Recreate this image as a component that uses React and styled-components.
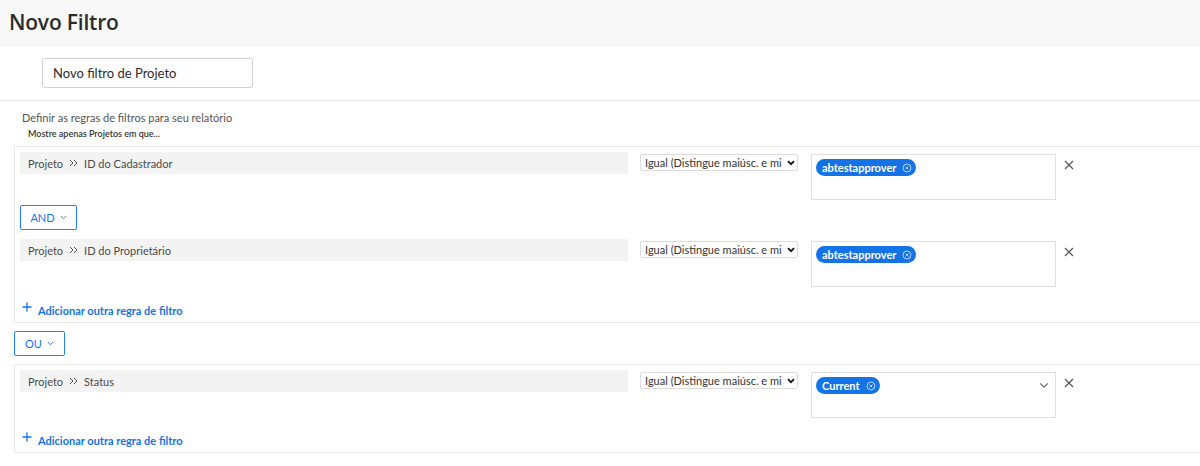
import React from "react";
import styled, { createGlobalStyle } from "styled-components";

const GlobalStyle = createGlobalStyle`
  html, body { margin: 0; padding: 0; background: #fff; }
  body { font-family: Lato, "Open Sans", Arial, sans-serif; color: #2c2c2c; overflow-x: hidden; }
  * { box-sizing: border-box; }
`;

const Page = styled.div`
  width: 1200px;
  overflow: hidden;
`;

const Header = styled.header`
  height: 47px;
  background: #f8f8f8;
  padding: 0 0 3px 9px;
  display: flex;
  align-items: center;
`;

const Title = styled.h1`
  margin: 0;
  font-family: "Open Sans", Lato, sans-serif;
  font-size: 21px;
  font-weight: 600;
  color: #2c2c2c;
  letter-spacing: -0.2px;
`;

const NameSection = styled.div`
  padding: 11px 0 12px 42px;
  border-bottom: 1px solid #e6e6e6;
`;

const NameInput = styled.div`
  width: 211px;
  height: 30px;
  border: 1px solid #cfcfcf;
  border-radius: 3px;
  display: flex;
  align-items: center;
  padding-left: 10px;
  font-size: 13px;
  color: #2c2c2c;
`;

const Rules = styled.section`
  padding: 10px 0 0 14px;
`;

const Intro = styled.div`
  padding-left: 8px;
  font-size: 11px;
  color: #555;
  line-height: 14px;
`;

const Subtitle = styled.div`
  padding-left: 14px;
  margin-top: 3px;
  font-size: 9px;
  color: #333;
  line-height: 12px;
  font-weight: 600;
`;

const Group = styled.div`
  width: 1220px;
  margin-top: ${(p) => p.$mt}px;
  border: 1px solid #e8e8e8;
  padding: ${(p) => p.$pt}px 5px 0 5px;
`;

const Row = styled.div`
  display: grid;
  grid-template-columns: 608px 158px 246px 16px;
  column-gap: 12px;
  align-items: start;
`;

const Field = styled.div`
  height: 22px;
  background: #f3f3f3;
  display: flex;
  align-items: center;
  padding-left: 8px;
  gap: 6px;
  font-size: 11px;
  color: #4b4b4b;
`;

const Select = styled.div`
  margin-top: 2px;
  height: 17px;
  border: 1px solid #dcdcdc;
  border-radius: 2px;
  display: flex;
  align-items: center;
  padding: 0 2px 0 4px;
  font-size: 11px;
  color: #333;
  overflow: hidden;
  white-space: nowrap;
`;

const SelectText = styled.span`
  flex: 1;
  overflow: hidden;
  white-space: nowrap;
`;

const ValueBox = styled.div`
  margin-top: 2px;
  margin-left: 1px;
  height: 46px;
  border: 1px solid #e0e0e0;
  position: relative;
  padding: 4px 0 0 4px;
  display: flex;
  align-items: flex-start;
`;

const Tag = styled.span`
  display: inline-flex;
  align-items: center;
  gap: 6px;
  height: 17px;
  padding: 0 4px 0 6px;
  border-radius: 9px;
  background: #1473e6;
  color: #fff;
  font-size: 11px;
  font-weight: 700;
`;

const ValueChevron = styled.span`
  position: absolute;
  right: 6px;
  top: 9px;
  display: flex;
`;

const Close = styled.span`
  margin-top: 8px;
  margin-left: -4px;
  display: flex;
`;

const Connector = styled.button`
  display: flex;
  align-items: center;
  justify-content: center;
  gap: 5px;
  width: ${(p) => p.$w}px;
  height: 25px;
  margin: ${(p) => p.$m};
  background: #fff;
  border: 1px solid #2680eb;
  border-radius: 2px;
  color: #1473e6;
  font-family: inherit;
  font-size: 11px;
  padding: 0;
`;

const AddLink = styled.div`
  display: flex;
  align-items: center;
  gap: 6px;
  padding: 0 0 4px 2px;
  margin-top: ${(p) => p.$mt}px;
  height: 20px;
  color: #1473e6;
  font-size: 11px;
  font-weight: 700;
`;

const DoubleChevron = () => (
  <svg width="9" height="8" viewBox="0 0 9 8" fill="none" stroke="#555" strokeWidth="1">
    <path d="M1 1l3 3-3 3M5 1l3 3-3 3" />
  </svg>
);

const Caret = () => (
  <svg width="8" height="6" viewBox="0 0 8 6">
    <path d="M1 1.2l3 3 3-3" fill="none" stroke="#111" strokeWidth="1.8" />
  </svg>
);

const SmallChevron = ({ color = "#1473e6", w = 7, h = 5 }) => (
  <svg width={w} height={h} viewBox="0 0 7 5">
    <path d="M0.8 1l2.7 2.7L6.2 1" fill="none" stroke={color} strokeWidth="0.9" />
  </svg>
);

const XIcon = () => (
  <svg width="10" height="10" viewBox="0 0 10 10">
    <path d="M1 1l8 8M9 1l-8 8" stroke="#555" strokeWidth="1.2" />
  </svg>
);

const TagX = () => (
  <svg width="10" height="10" viewBox="0 0 10 10" fill="none" stroke="rgba(255,255,255,0.75)" strokeWidth="0.9">
    <circle cx="5" cy="5" r="4" />
    <path d="M3.5 3.5l3 3M6.5 3.5l-3 3" />
  </svg>
);

const Plus = () => (
  <svg width="10" height="10" viewBox="0 0 10 10" style={{ marginTop: -6 }}>
    <path d="M5 0.5v9M0.5 5h9" stroke="#1473e6" strokeWidth="1.3" />
  </svg>
);

const Rule = ({ field, value, dropdown }) => (
  <Row>
    <Field>
      <span>Projeto</span>
      <DoubleChevron />
      <span>{field}</span>
    </Field>
    <Select>
      <SelectText>Igual (Distingue maiúsc. e mi</SelectText>
      <Caret />
    </Select>
    <ValueBox>
      <Tag>
        {value}
        <TagX />
      </Tag>
      {dropdown && (
        <ValueChevron>
          <SmallChevron color="#666" w={10} h={7} />
        </ValueChevron>
      )}
    </ValueBox>
    <Close>
      <XIcon />
    </Close>
  </Row>
);

export default function App() {
  return (
    <Page>
      <GlobalStyle />
      <Header>
        <Title>Novo Filtro</Title>
      </Header>
      <NameSection>
        <NameInput>Novo filtro de Projeto</NameInput>
      </NameSection>
      <Rules>
        <Intro>Definir as regras de filtros para seu relatório</Intro>
        <Subtitle>Mostre apenas Projetos em que...</Subtitle>
        <Group $mt={6} $pt={5}>
          <Rule field="ID do Cadastrador" value="abtestapprover" />
          <Connector $w={57} $m="5px 0 9px 0">
            AND <SmallChevron />
          </Connector>
          <Rule field="ID do Proprietário" value="abtestapprover" />
          <AddLink $mt={15}>
            <Plus />
            Adicionar outra regra de filtro
          </AddLink>
        </Group>
        <Connector $w={51} $m="8px 0 8px 0">
          OU <SmallChevron />
        </Connector>
        <Group $mt={0} $pt={5}>
          <Rule field="Status" value="Current" dropdown />
          <AddLink $mt={14}>
            <Plus />
            Adicionar outra regra de filtro
          </AddLink>
        </Group>
      </Rules>
    </Page>
  );
}
